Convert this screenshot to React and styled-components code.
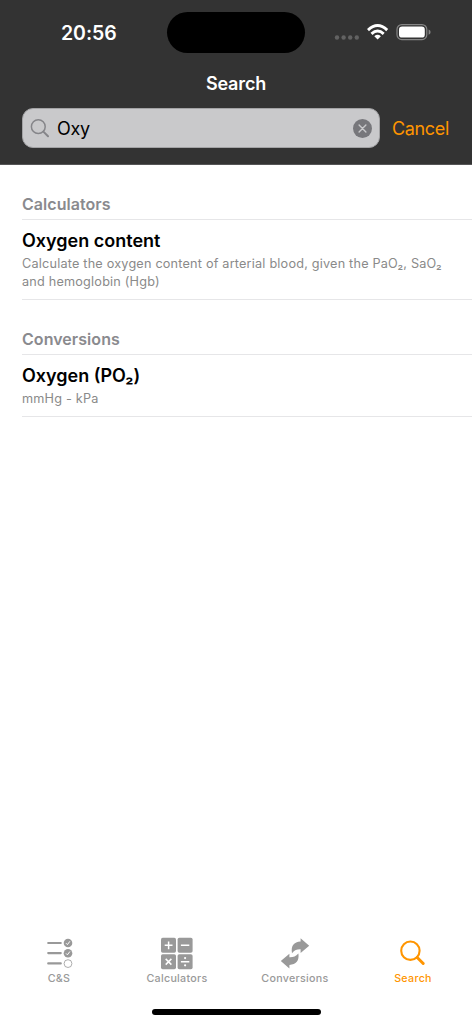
import React from 'react';
import styled, { createGlobalStyle } from 'styled-components';

const GlobalStyle = createGlobalStyle`
  * {
    box-sizing: border-box;
  }
  body {
    margin: 0;
    background: #ffffff;
    font-family: Inter, 'Liberation Sans', sans-serif;
  }
`;

const Screen = styled.div`
  display: flex;
  flex-direction: column;
  width: 472px;
  height: 1024px;
  overflow: hidden;
  background: #ffffff;
`;

const Header = styled.header`
  height: 165px;
  background: #333333;
  border-bottom: 1px solid #555556;
`;

const StatusBar = styled.div`
  display: grid;
  grid-template-columns: 167px 138px 1fr;
  height: 66px;
  padding-top: 12px;
`;

const Clock = styled.div`
  padding-left: 61px;
  color: #ffffff;
  font-size: 19.5px;
  font-weight: 600;
  line-height: 42px;
  letter-spacing: -0.05px;
`;

const Island = styled.div`
  height: 41px;
  border-radius: 21px;
  background: #000000;
`;

const StatusIcons = styled.div`
  padding: 8px 0 0 28px;
  svg {
    display: block;
  }
`;

const Title = styled.h1`
  margin: 0;
  height: 42px;
  color: #ffffff;
  font-size: 18px;
  font-weight: 600;
  line-height: 35px;
  letter-spacing: -0.15px;
  text-align: center;
`;

const SearchRow = styled.div`
  display: flex;
  align-items: center;
  padding: 0 22px;
`;

const SearchField = styled.div`
  display: flex;
  align-items: center;
  width: 358px;
  height: 40px;
  padding: 0 7px;
  border: 1px solid #a3a3a5;
  border-radius: 11px;
  background: #c9c9cb;
`;

const Query = styled.span`
  flex: 1;
  margin-left: 8px;
  color: #000000;
  font-size: 18px;
  letter-spacing: -0.3px;
`;

const Cancel = styled.span`
  margin-left: 12px;
  color: #ff9500;
  font-size: 18px;
  letter-spacing: -0.35px;
  white-space: nowrap;
`;

const Results = styled.main`
  flex: 1;
  padding: 15px 0 0 22px;
`;

const Section = styled.section`
  margin-bottom: 15px;
`;

const SectionTitle = styled.h2`
  margin: 0;
  height: 40px;
  border-bottom: 1px solid #e6e6e8;
  color: #8a8a8e;
  font-size: 16px;
  font-weight: 600;
  line-height: 48px;
  letter-spacing: 0.05px;
`;

const Item = styled.div`
  height: ${props => props.$height}px;
  padding-top: 8px;
  border-bottom: 1px solid #e6e6e8;
`;

const ItemTitle = styled.div`
  color: #000000;
  font-size: 18px;
  font-weight: 600;
  line-height: 26px;
`;

const ItemText = styled.div`
  margin-top: 1px;
  color: #8a8a8a;
  font-size: 12.7px;
  line-height: 17.6px;
  letter-spacing: 0.19px;
  white-space: pre-line;
`;

const TabBar = styled.nav`
  display: grid;
  grid-template-columns: repeat(4, 118px);
  height: 74px;
`;

const Tab = styled.div`
  display: flex;
  flex-direction: column;
  align-items: center;
  color: ${props => (props.$active ? '#ff9500' : '#999999')};
`;

const TabLabel = styled.span`
  font-size: 10.7px;
  font-weight: 500;
  line-height: 16px;
  letter-spacing: 0.3px;
`;

const HomeIndicator = styled.div`
  width: 169px;
  height: 6px;
  margin: 0 auto 9px;
  border-radius: 3px;
  background: #000000;
`;

const StatusGlyphs = () => (
  <svg width="100" height="24" viewBox="333 20 100 24">
    <g fill="#626262">
      <circle cx="337" cy="37.5" r="2.2" />
      <circle cx="343.6" cy="37.5" r="2.2" />
      <circle cx="350.2" cy="37.5" r="2.2" />
      <circle cx="356.8" cy="37.5" r="2.2" />
    </g>
    <g fill="none" stroke="#ffffff" strokeWidth="2.9">
      <path d="M368 30.1 Q377.6 21.1 387.2 30.1" />
      <path d="M371.5 33.8 Q377.6 28.3 383.7 33.8" />
    </g>
    <path d="M374.3 36.2 Q377.6 33.5 380.9 36.2 L377.6 39.5Z" fill="#ffffff" />
    <rect x="397" y="24.6" width="29.8" height="15" rx="4.8" fill="none" stroke="#858585" strokeWidth="1.2" />
    <rect x="399" y="26.6" width="25.8" height="11" rx="3.2" fill="#ffffff" />
    <path d="M428.6 29.5 Q430.6 30 430.6 32.1 Q430.6 34.2 428.6 34.7Z" fill="#858585" />
  </svg>
);

const FieldGlass = () => (
  <svg width="19" height="20" viewBox="30 118 19 20" fill="none" stroke="#858589">
    <circle cx="38.3" cy="126.7" r="6.9" strokeWidth="1.5" />
    <path d="M43.4 131.6 L48 136.2" strokeWidth="2" strokeLinecap="round" />
  </svg>
);

const ClearIcon = () => (
  <svg width="19" height="19" viewBox="0 0 19 19">
    <circle cx="9.5" cy="9.5" r="9.5" fill="#77777b" />
    <path d="M6.1 6.1 L12.9 12.9 M12.9 6.1 L6.1 12.9" stroke="#c9c9cb" strokeWidth="1.4" strokeLinecap="round" />
  </svg>
);

const ChecklistIcon = () => (
  <svg width="36" height="36" viewBox="41 935 36 36" fill="none">
    <path d="M48.2 943h12.6M48.2 953.1h12.6M48.2 963.4h12.6" stroke="#999999" strokeWidth="2.1" strokeLinecap="round" />
    <circle cx="68" cy="943" r="4.3" fill="#999999" />
    <circle cx="68" cy="953.2" r="4.3" fill="#999999" />
    <circle cx="68" cy="963.6" r="3.9" stroke="#999999" strokeWidth="0.8" />
    <path d="M66 943.2l1.4 1.4 2.5-3.3M66 953.4l1.4 1.4 2.5-3.3" stroke="#ffffff" strokeWidth="1" />
  </svg>
);

const CalculatorIcon = () => (
  <svg width="36" height="36" viewBox="159 935 36 36">
    <g fill="#999999">
      <rect x="161" y="937.7" width="15" height="15" rx="1.7" />
      <rect x="177.6" y="937.7" width="15" height="15" rx="1.7" />
      <rect x="161" y="954.2" width="15" height="15" rx="1.7" />
      <rect x="177.6" y="954.2" width="15" height="15" rx="1.7" />
    </g>
    <g stroke="#ffffff" strokeWidth="1.5">
      <path d="M164.7 945.3h7.8M168.6 941.4v7.8M180.9 945.3h8.4" />
      <path d="M165.7 958.9l5.7 5.7M171.4 958.9l-5.7 5.7M180.9 961.7h8.4" />
    </g>
    <circle cx="185.1" cy="958.1" r="1.1" fill="#ffffff" />
    <circle cx="185.1" cy="965.3" r="1.1" fill="#ffffff" />
  </svg>
);

const ConvertIcon = () => (
  <svg width="36" height="36" viewBox="277 935 36 36" fill="#999999">
    <path d="M300.6 938.3 L309.2 945.7 L300.6 953 V949.3 C297 949.2 294.6 950 292 953.2 C290.8 945.5 293.8 941.8 300.6 941.4Z" />
    <path d="M289.4 953.7 L280.8 961 L289.4 968.4 V965 C296.2 964.6 299.4 961 298.4 953.6 C295.6 956.8 293 957.3 289.4 957.2Z" />
  </svg>
);

const SearchIcon = () => (
  <svg width="36" height="36" viewBox="395 935 36 36" fill="none" stroke="#ff9500">
    <circle cx="410.4" cy="950.7" r="9.2" strokeWidth="2.1" />
    <path d="M417.2 957.5 L423.2 963.5" strokeWidth="3" strokeLinecap="round" />
  </svg>
);

const sections = [
  {
    title: 'Calculators',
    item: 'Oxygen content',
    text: 'Calculate the oxygen content of arterial blood, given the PaO₂, SaO₂\nand hemoglobin (Hgb)',
    height: 80,
  },
  { title: 'Conversions', item: 'Oxygen (PO₂)', text: 'mmHg - kPa', height: 62 },
];

const tabs = [
  { label: 'C&S', Icon: ChecklistIcon },
  { label: 'Calculators', Icon: CalculatorIcon },
  { label: 'Conversions', Icon: ConvertIcon },
  { label: 'Search', Icon: SearchIcon, active: true },
];

const App = () => (
  <Screen>
    <GlobalStyle />
    <Header>
      <StatusBar>
        <Clock>20:56</Clock>
        <Island />
        <StatusIcons><StatusGlyphs /></StatusIcons>
      </StatusBar>
      <Title>Search</Title>
      <SearchRow>
        <SearchField>
          <FieldGlass />
          <Query>Oxy</Query>
          <ClearIcon />
        </SearchField>
        <Cancel>Cancel</Cancel>
      </SearchRow>
    </Header>
    <Results>
      {sections.map(section => (
        <Section key={section.title}>
          <SectionTitle>{section.title}</SectionTitle>
          <Item $height={section.height}>
            <ItemTitle>{section.item}</ItemTitle>
            <ItemText>{section.text}</ItemText>
          </Item>
        </Section>
      ))}
    </Results>
    <TabBar>
      {tabs.map(({ label, Icon, active }) => (
        <Tab key={label} $active={active}>
          <Icon />
          <TabLabel>{label}</TabLabel>
        </Tab>
      ))}
    </TabBar>
    <HomeIndicator />
  </Screen>
);

export default App;
